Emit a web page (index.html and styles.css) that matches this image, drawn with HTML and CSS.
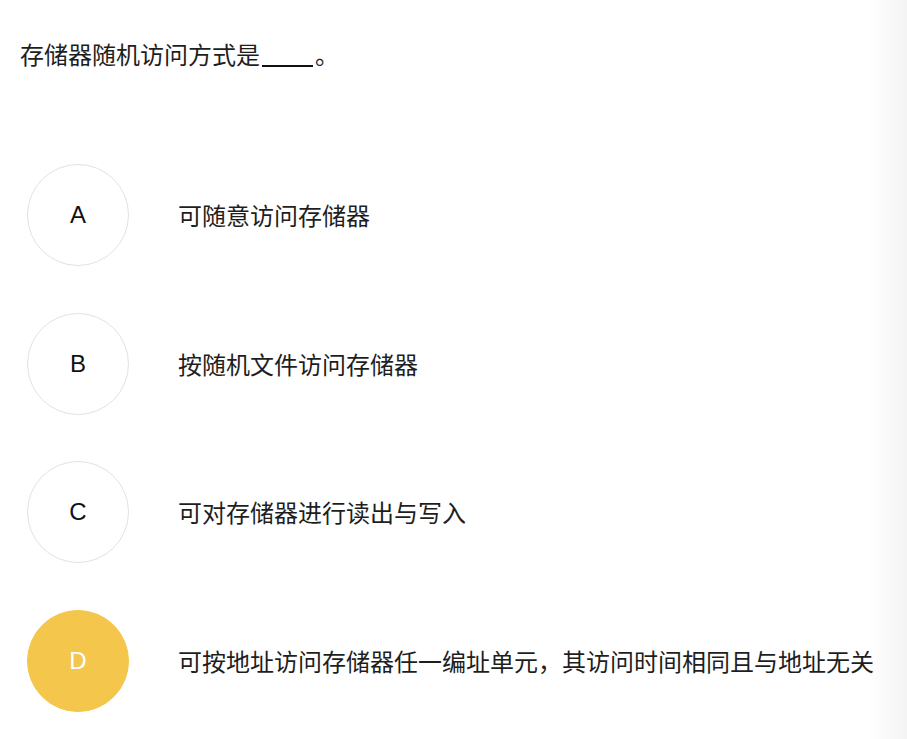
FILE: index.html
```html
<!DOCTYPE html>
<html lang="zh-CN">
<head>
<meta charset="utf-8">
<title>存储器随机访问方式</title>
<link rel="stylesheet" href="styles.css">
</head>
<body>
<div class="page">
  <div class="question">存储器随机访问方式是<span class="blank"></span>。</div>
  <div class="options">
    <div class="option">
      <div class="badge">A</div>
      <div class="label">可随意访问存储器</div>
    </div>
    <div class="option">
      <div class="badge">B</div>
      <div class="label">按随机文件访问存储器</div>
    </div>
    <div class="option">
      <div class="badge">C</div>
      <div class="label">可对存储器进行读出与写入</div>
    </div>
    <div class="option selected">
      <div class="badge">D</div>
      <div class="label">可按地址访问存储器任一编址单元，其访问时间相同且与地址无关</div>
    </div>
  </div>
</div>
<div class="edge-shade"></div>
</body>
</html>
```
FILE: styles.css
```css
html, body {
  margin: 0;
  padding: 0;
  background: #ffffff;
}
body {
  font-family: "Liberation Sans", "Noto Sans CJK SC", sans-serif;
  color: #1e1e1e;
}
.page {
  padding: 36px 0 0 20px;
}
.question {
  font-family: "Noto Sans CJK SC", sans-serif;
  font-size: 24px;
  line-height: 36px;
  height: 36px;
}
.blank {
  display: inline-block;
  width: 51px;
  height: 2px;
  background: #111;
  margin-left: 2px;
  margin-right: 2px;
  vertical-align: -3px;
}
.options {
  margin-top: 92px;
  margin-left: 7px;
  display: flex;
  flex-direction: column;
  gap: 46.5px;
}
.option {
  display: flex;
  align-items: center;
  height: 102px;
}
.badge {
  box-sizing: border-box;
  width: 102px;
  height: 102px;
  border-radius: 50%;
  border: 1px solid #e2e2e2;
  display: flex;
  align-items: center;
  justify-content: center;
  font-family: "Liberation Sans", sans-serif;
  font-size: 24px;
  color: #111;
  flex: none;
}
.selected .badge {
  background: #f4c64b;
  border-color: #f4c64b;
  color: #ffffff;
}
.label {
  margin-left: 49px;
  font-family: "Noto Sans CJK SC", sans-serif;
  font-size: 24px;
  line-height: 36px;
  color: #1e1e1e;
  white-space: nowrap;
}
.edge-shade {
  position: fixed;
  top: 0;
  right: 0;
  width: 40px;
  height: 100%;
  background: linear-gradient(to right, rgba(0,0,0,0), rgba(0,0,0,0.045));
  pointer-events: none;
}
```
